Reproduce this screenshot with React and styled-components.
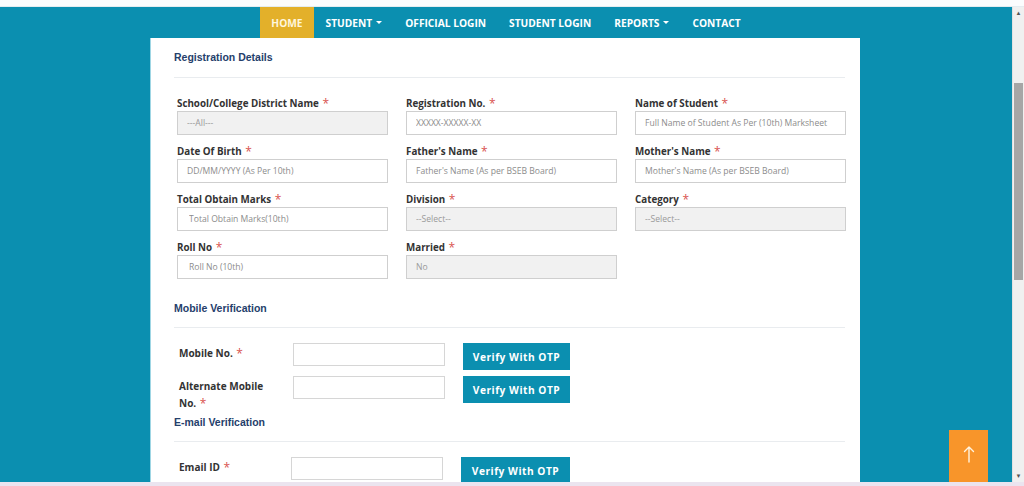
import { createGlobalStyle, styled } from 'styled-components';

const TEAL = '#0b8fb0';

const GlobalStyle = createGlobalStyle`
  html, body {
    margin: 0;
    padding: 0;
    overflow: hidden;
  }
  * {
    box-sizing: border-box;
  }
`;

const navItems = [
  { label: 'HOME', active: true },
  { label: 'STUDENT', caret: true },
  { label: 'OFFICIAL LOGIN' },
  { label: 'STUDENT LOGIN' },
  { label: 'REPORTS', caret: true },
  { label: 'CONTACT' },
];

const fields = [
  { label: 'School/College District Name', value: '---All---', disabled: true },
  { label: 'Registration No.', value: 'XXXXX-XXXXX-XX' },
  { label: 'Name of Student', value: 'Full Name of Student As Per (10th) Marksheet' },
  { label: 'Date Of Birth', value: 'DD/MM/YYYY (As Per 10th)' },
  { label: "Father's Name", value: "Father's Name (As per BSEB Board)" },
  { label: "Mother's Name", value: "Mother's Name (As per BSEB Board)" },
  { label: 'Total Obtain Marks', value: 'Total Obtain Marks(10th)', indent: 11 },
  { label: 'Division', value: '--Select--', disabled: true },
  { label: 'Category', value: '--Select--', disabled: true },
  { label: 'Roll No', value: 'Roll No (10th)', indent: 11 },
  { label: 'Married', value: 'No', disabled: true },
];

const Star = () => <Asterisk>*</Asterisk>;

const App = () => {
  return (
    <>
      <GlobalStyle />
      <Page>
        <TopStrip />
        <Body>
          <Main>
            <Nav>
              {navItems.map((item) => (
                <NavItem key={item.label} $active={item.active}>
                  {item.label}
                  {item.caret && <Caret />}
                </NavItem>
              ))}
            </Nav>
            <Card>
              <SectionTitle>Registration Details</SectionTitle>
              <Divider />
              <FieldGrid>
                {fields.map((field) => (
                  <FieldBox key={field.label}>
                    <FieldLabel>
                      {field.label} <Star />
                    </FieldLabel>
                    {field.disabled ? (
                      <Input readOnly value={field.value} $disabled $indent={field.indent} />
                    ) : (
                      <Input placeholder={field.value} $indent={field.indent} />
                    )}
                  </FieldBox>
                ))}
              </FieldGrid>

              <SectionTitle $top={22}>Mobile Verification</SectionTitle>
              <Divider />
              <VerifyRow $top={15}>
                <VerifyLabel>
                  Mobile No. <Star />
                </VerifyLabel>
                <VerifyInput />
                <VerifyButton type="button">Verify With OTP</VerifyButton>
              </VerifyRow>
              <VerifyRow $top={6}>
                <VerifyLabel>
                  Alternate Mobile No. <Star />
                </VerifyLabel>
                <VerifyInput />
                <VerifyButton type="button">Verify With OTP</VerifyButton>
              </VerifyRow>

              <SectionTitle $top={3}>E-mail Verification</SectionTitle>
              <Divider />
              <VerifyRow $top={15} $shift={-2}>
                <VerifyLabel>
                  Email ID <Star />
                </VerifyLabel>
                <VerifyInput />
                <VerifyButton type="button" $wide>
                  Verify With OTP
                </VerifyButton>
              </VerifyRow>
            </Card>
            <BackToTop type="button" aria-label="Back to top">
              <svg width="12" height="18" viewBox="0 0 12 18" fill="none">
                <path
                  d="M6 17V2M1.5 6.5L6 2l4.5 4.5"
                  stroke="#fff4e0"
                  strokeWidth="1.4"
                  strokeLinecap="round"
                  strokeLinejoin="round"
                />
              </svg>
            </BackToTop>
          </Main>
          <ScrollTrack>
            <ScrollArrow>▲</ScrollArrow>
            <ScrollThumb />
            <ScrollArrow $bottom>▼</ScrollArrow>
          </ScrollTrack>
        </Body>
        <BottomStrip />
      </Page>
    </>
  );
};

export default App;

const Page = styled.div`
  width: 1024px;
  height: 486px;
  display: flex;
  flex-direction: column;
  overflow: hidden;
  font-family: 'Open Sans', 'Liberation Sans', sans-serif;
`;

const TopStrip = styled.div`
  height: 7px;
  flex-shrink: 0;
  background: #fbfcfd;
  border-bottom: 1px solid #e4ecf0;
`;

const BottomStrip = styled.div`
  height: 4px;
  flex-shrink: 0;
  background: #ebe4ef;
`;

const Body = styled.div`
  flex: 1;
  min-height: 0;
  display: flex;
`;

const Main = styled.div`
  position: relative;
  flex: 1;
  display: flex;
  flex-direction: column;
  align-items: center;
  overflow: hidden;
  background: ${TEAL};
`;

const Nav = styled.nav`
  height: 31px;
  flex-shrink: 0;
  display: flex;
  align-items: stretch;
`;

const NavItem = styled.a`
  display: flex;
  align-items: center;
  gap: 4px;
  padding: 0 11.5px;
  background: ${({ $active }) => ($active ? '#e3b02a' : 'transparent')};
  color: ${({ $active }) => ($active ? '#fff6dc' : '#ffffff')};
  font-size: 10.2px;
  font-weight: 700;
  white-space: nowrap;
`;

const Caret = styled.span`
  width: 0;
  height: 0;
  border-left: 3px solid transparent;
  border-right: 3px solid transparent;
  border-top: 3px solid #ffffff;
`;

const Card = styled.section`
  width: 710px;
  flex: 1;
  margin-right: 2px;
  padding: 12px 15px 0 23px;
  background: #ffffff;
  border-left: 1px solid #9fd6e4;
`;

const SectionTitle = styled.h3`
  margin: ${({ $top = 0 }) => $top}px 0 12px;
  height: 14px;
  font-family: 'Liberation Sans', Arial, sans-serif;
  font-size: 10.5px;
  font-weight: 700;
  line-height: 14px;
  color: #25406b;

  &:first-child {
    margin-bottom: 13px;
  }
`;

const Divider = styled.div`
  height: 1px;
  background: #e9ecef;
`;

const FieldGrid = styled.div`
  display: grid;
  grid-template-columns: repeat(3, 211px);
  column-gap: 18px;
  row-gap: 9px;
  margin: 18px 0 0 3px;
`;

const FieldBox = styled.div`
  display: flex;
  flex-direction: column;
  gap: 1px;
`;

const FieldLabel = styled.label`
  height: 14px;
  padding-top: 1px;
  font-size: 9.8px;
  font-weight: 700;
  line-height: 14px;
  color: #333333;
  white-space: nowrap;
`;

const Asterisk = styled.span`
  margin-left: 1px;
  font-size: 12px;
  font-weight: 400;
  line-height: 0;
  color: #d9534f;
  vertical-align: -1px;
`;

const Input = styled.input`
  width: 100%;
  height: 24px;
  padding: 0 0 0 ${({ $indent = 9 }) => $indent}px;
  border: 1px solid #cfcfcf;
  background: ${({ $disabled }) => ($disabled ? '#f1f1f1' : '#ffffff')};
  font-family: 'Open Sans', sans-serif;
  font-size: 8.6px;
  color: #9a9a9a;
  outline: none;

  &::placeholder {
    color: #8c8c8c;
  }
`;

const VerifyRow = styled.div`
  display: flex;
  align-items: flex-start;
  margin-top: ${({ $top }) => $top}px;
  padding-left: 5px;

  > input {
    margin-left: ${({ $shift = 0 }) => $shift}px;
  }
`;

const VerifyLabel = styled.label`
  width: 92px;
  margin-right: 22px;
  padding-top: 2px;
  font-size: 10px;
  font-weight: 700;
  line-height: 17px;
  color: #333333;
`;

const VerifyInput = styled.input`
  width: 152px;
  height: 23px;
  margin-right: 18px;
  border: 1px solid #d6d6d6;
  background: #ffffff;
  outline: none;
`;

const VerifyButton = styled.button`
  width: ${({ $wide }) => ($wide ? 109 : 107)}px;
  height: 27px;
  padding: 0;
  border: none;
  background: ${TEAL};
  color: #ffffff;
  font-family: 'Open Sans', sans-serif;
  font-size: 10.2px;
  font-weight: 700;
  letter-spacing: 0.5px;
`;

const BackToTop = styled.button`
  position: absolute;
  right: 24px;
  bottom: 0;
  width: 39px;
  height: 52px;
  padding: 0 0 4px;
  border: none;
  background: #f8952a;
  display: flex;
  align-items: center;
  justify-content: center;
`;

const ScrollTrack = styled.div`
  width: 12px;
  flex-shrink: 0;
  display: flex;
  flex-direction: column;
  align-items: center;
  background: #f0f0f0;
  border-left: 1px solid #e2e2e2;
`;

const ScrollArrow = styled.span`
  height: 12px;
  margin-top: ${({ $bottom }) => ($bottom ? 'auto' : '0')};
  font-size: 6px;
  line-height: 12px;
  color: #555555;
`;

const ScrollThumb = styled.div`
  width: 9px;
  height: 197px;
  margin-top: 64px;
  background: #a6a6a6;
`;
